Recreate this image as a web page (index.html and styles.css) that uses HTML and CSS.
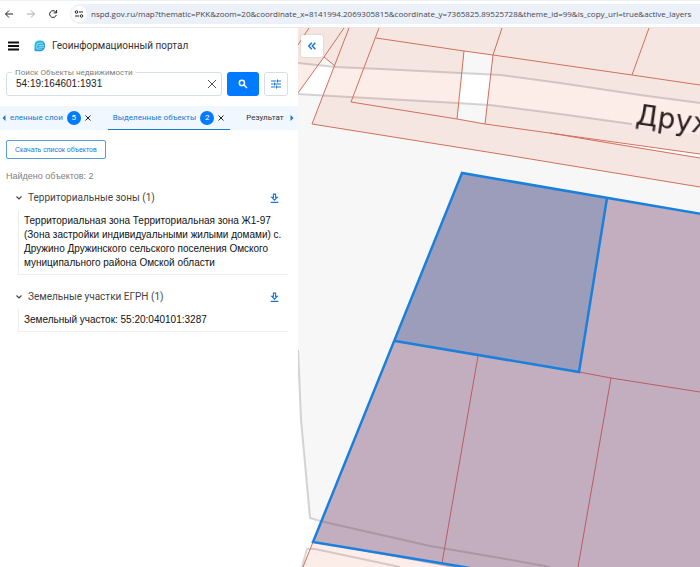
FILE: index.html
```html
<!DOCTYPE html>
<html lang="ru">
<head>
<meta charset="utf-8">
<meta name="viewport" content="width=device-width, initial-scale=1">
<title>Геоинформационный портал</title>
<link rel="stylesheet" href="styles.css">
</head>
<body>
<header class="browser">
  <button class="nav-btn" aria-label="Назад"><svg width="10" height="10" viewBox="0 0 10 10"><path d="M5 1.500 1.500 5 5 8.500M1.500 5H9"/></svg></button>
  <button class="nav-btn nav-btn--off" aria-label="Вперёд" disabled><svg width="10" height="10" viewBox="0 0 10 10"><path d="M5 1.500 8.500 5 5 8.500M8.500 5H1"/></svg></button>
  <button class="nav-btn" aria-label="Обновить"><svg width="10" height="10" viewBox="0 0 10 10"><path d="M8.300 6A3.400 3.400 0 1 1 7.600 2.800L8.500 3.700M8.600 1v2.900H5.700"/></svg></button>
  <div class="address">
    <button class="site-info" aria-label="Сведения о сайте"><svg width="10" height="10" viewBox="0 0 10 10"><circle cx="2.500" cy="3" r="1.300"/><path d="M5 3h4M1 7h4"/><circle cx="7.500" cy="7" r="1.300"/></svg></button>
    <input class="url" type="text" aria-label="Адрес" value="nspd.gov.ru/map?thematic=PKK&amp;zoom=20&amp;coordinate_x=8141994.2069305815&amp;coordinate_y=7365825.89525728&amp;theme_id=99&amp;is_copy_url=true&amp;active_layers">
  </div>
</header>
<div class="app">
  <aside class="sidebar">
    <div class="brand">
      <button class="menu" aria-label="Меню"><svg width="12" height="10" viewBox="0 0 12 10"><path d="M0 1.500h11M0 5h11M0 8.500h11"/></svg></button>
      <svg class="logo" width="12" height="12" viewBox="0 0 12 12">
        <defs><linearGradient id="lg" x1="0" y1="0" x2="1" y2="1"><stop offset="0" stop-color="#23d3dd"/><stop offset="1" stop-color="#1b7ff0"/></linearGradient></defs>
        <path fill="url(#lg)" d="M5 .5h1.500A4.500 4.500 0 0 1 11 5v1A5 5 0 0 1 6 11.300H1.200Q.3 11.300.5 10V5A4.500 4.500 0 0 1 5 .5z"/>
        <path d="M2.800 9V5.800A2.600 2.600 0 0 1 5.400 3.200H9M4.700 5.400H10M4.700 7.200H10M3 9.100h5.500" fill="none" stroke="#d9f6ff" stroke-width=".7"/>
      </svg>
      <h1 class="title">Геоинформационный портал</h1>
    </div>
    <form class="search">
      <div class="field">
        <label class="field-label" for="q">Поиск Объекты недвижимости</label>
        <input class="field-input" id="q" type="text" value="54:19:164601:1931">
        <button class="clear" type="button" aria-label="Очистить"><svg width="10" height="10" viewBox="0 0 10 10"><path d="M1 1l8 8M9 1l-8 8"/></svg></button>
      </div>
      <button class="find" type="button" aria-label="Найти"><svg width="10" height="10" viewBox="0 0 10 10"><circle cx="3.900" cy="3.900" r="2.600"/><path d="M5.800 5.800 9 9"/></svg></button>
      <button class="filters" type="button" aria-label="Фильтры"><svg width="10" height="10" viewBox="0 0 10 10"><path d="M0 2h5.500M6.500.5v3M6.500 2H10M0 5h2.500M3.500 3.500v3M4 5h6M0 8h4.500M5.500 6.500v3M5.500 8H10"/></svg></button>
    </form>
    <nav class="tabs">
      <button class="scroll" aria-label="Назад"><svg width="4" height="6" viewBox="0 0 4 6"><path d="M3.500 0v6L.5 3z"/></svg></button>
      <div class="tab tab--layers"><a class="tab-link" href="#layers">еленные слои</a><span class="badge">5</span><button class="tab-close" aria-label="Закрыть"><svg width="6" height="6" viewBox="0 0 6 6"><path d="M.5.5l5 5M5.500.5l-5 5"/></svg></button></div>
      <div class="tab tab--active"><a class="tab-link" href="#objects">Выделенные объекты</a><span class="badge">2</span><button class="tab-close" aria-label="Закрыть"><svg width="6" height="6" viewBox="0 0 6 6"><path d="M.5.5l5 5M5.500.5l-5 5"/></svg></button></div>
      <div class="tab tab--results"><a class="tab-link" href="#results">Результат</a></div>
      <button class="scroll" aria-label="Вперёд"><svg width="4" height="6" viewBox="0 0 4 6"><path d="M.5 0v6l3-3z"/></svg></button>
    </nav>
    <main class="results">
      <button class="export">Скачать список объектов</button>
      <p class="found">Найдено объектов: 2</p>
      <section class="group">
        <div class="group-head">
          <button class="toggle"><svg width="6" height="4" viewBox="0 0 6 4"><path d="M.5.5 3 3 5.500.5"/></svg>Территориальные зоны (1)</button>
          <button class="download" aria-label="Скачать"><svg width="9" height="11" viewBox="0 0 8 10"><path d="M3 1h2v3h1.500L4 6.500 1.500 4H3zM.5 8.500h7"/></svg></button>
        </div>
        <p class="item">Территориальная зона Территориальная зона Ж1-97 (Зона застройки индивидуальными жилыми домами) с. Дружино Дружинского сельского поселения Омского муниципального района Омской области</p>
      </section>
      <section class="group">
        <div class="group-head">
          <button class="toggle"><svg width="6" height="4" viewBox="0 0 6 4"><path d="M.5.5 3 3 5.500.5"/></svg>Земельные участки ЕГРН (1)</button>
          <button class="download" aria-label="Скачать"><svg width="9" height="11" viewBox="0 0 8 10"><path d="M3 1h2v3h1.500L4 6.500 1.500 4H3zM.5 8.500h7"/></svg></button>
        </div>
        <p class="item">Земельный участок: 55:20:040101:3287</p>
      </section>
    </main>
  </aside>
  <div class="map">
    <svg class="canvas" viewBox="298 28 402 539" preserveAspectRatio="xMinYMin slice" role="img" aria-label="Карта">
      <path class="ground" d="M298 28H700V567H298z"/>
      <path class="road" d="M298 63 335 67 380 69 500 75 560 83 640 95 700 103V135L632 124 560 114 490 105 440 102 350 97 298 94z"/>
      <path class="road" d="M298 350 301 420 310 518 430 546 500 558 550 567H298z"/>
      <g class="zones">
        <path d="M298 28H344L324 57 298 93z"/>
        <path d="M344 28H349L335 66 324 57z"/>
        <path fill-rule="evenodd" d="M349 28H700V187L500 154 312 124zM464 51 457 119 485 124 493 55z"/>
        <path d="M313 542 303 567H460z"/>
      </g>
      <path class="sliver" d="M580 137 700 154V158z"/>
      <path class="kerb" d="M298 63 335 67 380 69 500 75 560 83 640 95 700 103M298 94 350 97 440 102 490 105 560 114 632 124"/>
      <g class="parcels">
        <path class="parcel" d="M462 173 702 215V569H460L313 542z"/>
        <path class="parcel parcel--selected" d="M462 173 607 198 579 372 395 341z"/>
      </g>
      <path class="kerb" d="M298 350 301 420 310 518 320 521 430 546 500 558 550 567M302 567 307 549H315L400 567"/>
      <path class="bounds" d="M298 45 309 28M298 93 324 57 344 28M324 57 335 66M349 28 312 124 500 154 700 187M379 28 351 102 457 119 485 124 700 154M550 133 603 142 700 158M376 38 464 51 493 55 632 75 700 85M464 51 457 119M502 28 493 55 485 124M649 28 632 75M313 542 303 567"/>
      <path class="bounds bounds--inner" d="M579 372 611 378 700 392M478 356 442 563M611 378 578 567"/>
      <path class="outline" d="M702 214 462 173 313 542 470 568M607 198 579 372 395 341"/>
      <text class="street" transform="translate(635 124) rotate(8)">Друж</text>
    </svg>
    <button class="collapse" aria-label="Свернуть панель"><svg width="8" height="8" viewBox="0 0 8 8"><path d="M3.800.8.800 4l3 3.200M7.300.8l-3 3.200 3 3.200"/></svg></button>
  </div>
</div>
</body>
</html>
```
FILE: styles.css
```css
* { box-sizing: border-box; }
body {
  margin: 0;
  height: 100vh;
  display: flex;
  flex-direction: column;
  overflow: hidden;
  background: #fff;
  color: #222;
  font: 10px/14px "Liberation Sans", sans-serif;
}
button {
  display: flex;
  align-items: center;
  justify-content: center;
  flex: none;
  margin: 0;
  padding: 0;
  border: 0;
  background: none;
  color: inherit;
  font: inherit;
  white-space: nowrap;
}
button svg { fill: none; stroke: currentColor; }
input { font: inherit; color: inherit; border: 0; outline: 0; padding: 0; background: none; min-width: 0; }
a { color: inherit; text-decoration: none; }
h1, p { margin: 0; font-weight: normal; }

.browser {
  flex: none;
  display: flex;
  align-items: center;
  gap: 12px;
  height: 28px;
  padding-left: 4px;
  border-top: 1px solid #eceff6;
  border-bottom: 1px solid #e6e6e8;
}
.nav-btn { width: 10px; height: 20px; color: #222; }
.nav-btn--off { color: #aaa; }
.address {
  flex: 1;
  min-width: 0;
  display: flex;
  align-items: center;
  gap: 4px;
  height: 20px;
  padding-left: 1px;
  border-radius: 10px 0 0 10px;
  background: #ebf0f9;
}
.site-info { width: 16px; height: 16px; border-radius: 50%; background: #fff; color: #222; }
.url { flex: 1; font: 8px/16px "Open Sans", sans-serif; color: #45484e; }

.app { flex: 1; min-height: 0; display: flex; }
.sidebar { flex: none; width: 298px; background: #fff; }
.brand { display: flex; align-items: center; height: 36px; padding-left: 8px; }
.menu { width: 12px; height: 12px; color: #111; }
.menu path { stroke-width: 2; }
.logo { margin: 0 6px 0 14px; }
.title { font: 10px/16px Roboto, sans-serif; color: #333; }

.search { display: flex; gap: 5px; padding: 8px 10px 10px 6px; }
.field {
  position: relative;
  flex: 1;
  min-width: 0;
  display: flex;
  align-items: center;
  height: 24px;
  padding: 0 4px 0 9px;
  border: 1px solid #d5dfea;
  border-radius: 3px;
}
.field-label {
  position: absolute;
  left: 5px;
  top: -5px;
  padding: 0 3px;
  background: #fff;
  color: #808080;
  font: 8px/10px Roboto, sans-serif;
  white-space: nowrap;
}
.field-input { flex: 1; font-size: 10px; color: #222; }
.clear { width: 10px; color: #555; }
.find { width: 32px; height: 24px; border-radius: 3px; background: #007bff; color: #fff; }
.find svg { stroke-width: 1.5; }
.filters { width: 24px; height: 24px; border: 1px solid #d5dfea; border-radius: 3px; color: #1976d2; }

.tabs {
  display: flex;
  align-items: center;
  height: 24px;
  background: #f0f7ff;
  color: #1976d2;
  font: 8px/14px Roboto, sans-serif;
  white-space: nowrap;
}
.scroll { width: 10px; padding-right: 2px; color: #1976d2; }
.scroll svg { fill: currentColor; stroke: none; }
.tab { display: flex; align-items: center; height: 24px; border-bottom: 1px solid transparent; }
.tab--layers { padding-right: 16px; }
.tab--active { padding: 0 5px; border-color: #1976d2; }
.tab--results { flex: 1; min-width: 0; padding-left: 16px; color: #333; }
.badge {
  width: 14px;
  height: 14px;
  margin: 0 3px 0 4px;
  border-radius: 50%;
  background: #007bff;
  color: #fff;
  text-align: center;
}
.tab-close { width: 8px; color: #222; }

.results { padding: 10px 10px 0 6px; }
.export { height: 19px; padding: 0 8px; border: 1px solid #5a9bd8; border-radius: 2px; color: #1976d2; font-size: 7px; }
.found { margin: 10px 0 8px; color: #808080; font-size: 9px; }
.group { margin-bottom: 15px; }
.group-head { display: flex; align-items: center; justify-content: space-between; height: 14px; padding: 0 9px 0 10px; color: #444; }
.toggle { gap: 6px; font: 10px/14px Roboto, sans-serif; }
.toggle svg { stroke-width: 1.2; }
.download { color: #1976d2; }
.item { margin: 5px 0 0 12px; padding: 4px 5px; border: 1px solid #eee; border-width: 0 0 1px 1px; color: #111; }

.map { position: relative; flex: 1; min-width: 0; overflow: hidden; }
.canvas { display: block; width: 100%; height: 100%; }
.ground { fill: #f7f7f7; }
.road, .sliver { fill: #fff; }
.zones { fill: rgb(241 135 108 / 15%); }
.kerb { fill: none; stroke: rgb(90 80 80 / 24%); stroke-width: 2; filter: blur(.5px); }
.parcel { fill: #c3aec0; }
.parcel--selected { fill: #9b9dbb; }
.bounds { fill: none; stroke: #d0705c; stroke-width: 1; }
.bounds--inner { stroke: #b85c64; }
.outline { fill: none; stroke: #1a80dc; stroke-width: 2.5; }
.street { fill: #2b2020; font: 28px "DejaVu Sans", sans-serif; filter: blur(.7px); }
.collapse {
  position: absolute;
  left: 3px;
  top: 7px;
  width: 22px;
  height: 22px;
  border-radius: 2px;
  background: #fff;
  color: #1976d2;
  box-shadow: 0 0 2px rgb(0 0 0 / 20%);
}
.collapse svg { stroke-width: 1.5; }
```
